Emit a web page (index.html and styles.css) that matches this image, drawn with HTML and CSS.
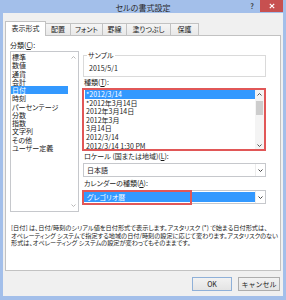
FILE: index.html
```html
<!DOCTYPE html>
<html lang="ja">
<head>
<meta charset="utf-8">
<title>セルの書式設定</title>
<link rel="stylesheet" href="styles.css">
</head>
<body>
<div class="window">
  <div class="titlebar">
    <div class="title">セルの書式設定</div>
    <div class="controls">
      <div class="help">?</div>
      <div class="close">
        <svg width="6" height="6" viewBox="0 0 6 6"><path d="M0.8 0.8L5.2 5.2M5.2 0.8L0.8 5.2" stroke="#fff" stroke-width="1.2" fill="none"/></svg>
      </div>
    </div>
  </div>
  <div class="client">
    <div class="tabs">
      <div class="tab active t1">表示形式</div>
      <div class="tab t2">配置</div>
      <div class="tab t3">フォント</div>
      <div class="tab t4">罫線</div>
      <div class="tab t5">塗りつぶし</div>
      <div class="tab t6">保護</div>
    </div>
    <div class="panel">
      <div class="main">
        <div class="left">
          <div class="lbl">分類(<u>C</u>):</div>
          <div class="listbox cat">
            <ul class="items">
              <li>標準</li>
              <li>数値</li>
              <li>通貨</li>
              <li>会計</li>
              <li class="sel">日付</li>
              <li>時刻</li>
              <li>パーセンテージ</li>
              <li>分数</li>
              <li>指数</li>
              <li>文字列</li>
              <li>その他</li>
              <li>ユーザー定義</li>
            </ul>
            <div class="vscroll disabled">
              <svg class="arr" width="5" height="3" viewBox="0 0 5 3"><path d="M0.5 2.5L2.5 0.5L4.5 2.5" stroke="#b8b8b8" fill="none"/></svg>
              <svg class="arr" width="5" height="3" viewBox="0 0 5 3"><path d="M0.5 0.5L2.5 2.5L4.5 0.5" stroke="#b8b8b8" fill="none"/></svg>
            </div>
          </div>
        </div>
        <div class="right">
          <fieldset class="sample">
            <legend>サンプル</legend>
            <div class="sample-val">2015/5/1</div>
          </fieldset>
          <div class="lbl">種類(<u>T</u>):</div>
          <div class="listbox types">
            <ul class="items">
              <li class="sel">*2012/3/14</li>
              <li>*2012年3月14日</li>
              <li>2012年3月14日</li>
              <li>2012年3月</li>
              <li>3月14日</li>
              <li>2012/3/14</li>
              <li>2012/3/14 1:30 PM</li>
            </ul>
            <div class="vscroll">
              <div class="sbtn"><svg width="5" height="3" viewBox="0 0 5 3"><path d="M0.5 2.5L2.5 0.5L4.5 2.5" stroke="#555" fill="none"/></svg></div>
              <div class="thumb"></div>
              <div class="track"></div>
              <div class="sbtn"><svg width="5" height="3" viewBox="0 0 5 3"><path d="M0.5 0.5L2.5 2.5L4.5 0.5" stroke="#555" fill="none"/></svg></div>
            </div>
          </div>
          <div class="lbl gap">ロケール (国または地域)(<u>L</u>):</div>
          <div class="combo">
            <div class="val">日本語</div>
            <div class="drop"><svg width="5" height="3" viewBox="0 0 5 3"><path d="M0.5 0.5L2.5 2.5L4.5 0.5" stroke="#444" fill="none"/></svg></div>
          </div>
          <div class="lbl gap2">カレンダーの種類(<u>A</u>):</div>
          <div class="combo cal">
            <div class="val">グレゴリオ暦</div>
            <div class="drop"><svg width="5" height="3" viewBox="0 0 5 3"><path d="M0.5 0.5L2.5 2.5L4.5 0.5" stroke="#444" fill="none"/></svg></div>
            <span class="mark"></span>
          </div>
        </div>
      </div>
      <p class="desc">[日付] は、日付/時刻のシリアル値を日付形式で表示します。アスタリスク (*) で始まる日付形式は、<br>オペレーティング システムで指定する地域の日付/時刻の設定に応じて変わります。アスタリスクのない<br>形式は、オペレーティング システムの設定が変わってもそのままです。</p>
    </div>
    <div class="buttons">
      <button class="btn ok">OK</button>
      <button class="btn cancel">キャンセル</button>
    </div>
  </div>
</div>
</body>
</html>
```

FILE: styles.css
```css
* { box-sizing: border-box; }
html, body { margin: 0; padding: 0; }
body {
  width: 286px;
  height: 300px;
  overflow: hidden;
  font-family: "Noto Sans CJK JP", "Noto Sans", sans-serif;
  font-feature-settings: "palt" 1;
  font-size: 7px;
  color: #1a1a1a;
}
ul { list-style: none; margin: 0; padding: 0; }
u { text-decoration-thickness: 0.6px; text-underline-offset: 1px; }

.window {
  width: 286px;
  height: 300px;
  background: #a3bfea;
  display: flex;
  flex-direction: column;
}

/* title bar */
.titlebar {
  height: 13px;
  display: grid;
  grid-template-columns: 1fr auto 1fr;
  align-items: start;
}
.title {
  grid-column: 2;
  font-size: 8px;
  line-height: 12px;
  margin-top: 2px;
  color: #2a2a2a;
  white-space: nowrap;
}
.controls {
  grid-column: 3;
  justify-self: end;
  display: flex;
  align-items: flex-start;
}
.help {
  width: 10px;
  line-height: 12px;
  text-align: center;
  font-size: 7px;
  font-weight: bold;
  color: #3a3a3a;
  margin-right: 3px;
}
.close {
  width: 23px;
  height: 12px;
  margin-right: 3px;
  background: #c75050;
  display: flex;
  align-items: center;
  justify-content: center;
}

/* client area */
.client {
  flex: 1;
  margin: 0 3px 4px;
  background: #f0f0f0;
  padding: 8px 2px 0;
  display: flex;
  flex-direction: column;
}

.tabs {
  display: flex;
  align-items: flex-end;
  height: 14px;
  position: relative;
  z-index: 1;
}
.tab {
  height: 12px;
  border: 1px solid #c2c2c2;
  border-bottom: 0;
  background: linear-gradient(#f5f5f5, #e8e8e8);
  text-align: center;
  line-height: 11px;
  margin-left: -1px;
  white-space: nowrap;
}
.tab.active {
  height: 15px;
  margin-bottom: -1px;
  margin-left: 0;
  background: #fff;
  line-height: 13px;
}
.t1 { width: 41px; }
.t2 { width: 26px; }
.t3 { width: 33px; }
.t4 { width: 25px; }
.t5 { width: 45px; }
.t6 { width: 29px; }

.panel {
  height: 236px;
  border: 1px solid #c2c2c2;
  background: #fff;
  padding: 5px 14px 0 4px;
}

.main {
  display: grid;
  grid-template-columns: 69px 184px;
  column-gap: 3px;
}

.lbl {
  line-height: 9px;
  white-space: nowrap;
}
.right .lbl { padding-left: 2px; margin-top: 1px; }
.right .lbl.gap { margin-top: 1px; }
.right .lbl.gap2 { margin-top: 2px; }

.listbox {
  display: flex;
  border: 1px solid #c6c8cc;
  background: #fff;
  overflow: hidden;
}
.listbox .items { flex: 1; min-width: 0; }
.listbox li { white-space: nowrap; }
.listbox li.sel { background: #3399ff; color: #fff; }

.cat {
  height: 161px;
  margin-top: 1px;
}
.cat .items { padding-top: 1px; }
.cat li {
  line-height: 8.25px;
  height: 8.25px;
  padding-left: 1px;
}
.vscroll {
  display: flex;
  flex-direction: column;
  align-items: center;
}
.cat .vscroll {
  width: 10px;
  justify-content: space-between;
  padding: 4px 0;
}

.types {
  height: 63px;
  margin-top: 1px;
  border: 2px solid #e15757;
}
.types li {
  line-height: 8.6px;
  height: 8.6px;
  padding-left: 1px;
  margin-left: 1px;
}
.types .vscroll {
  width: 9px;
  background: #f4f4f4;
}
.sbtn {
  width: 9px;
  height: 8px;
  display: flex;
  align-items: center;
  justify-content: center;
}
.thumb {
  width: 7px;
  height: 14px;
  margin-top: 3px;
  background: #cdcdcd;
}
.track { flex: 1; }

/* sample group */
.sample {
  margin: 9px 0 0 1px;
  border: 1px solid #dadada;
  padding: 4px 5px 3px;
  min-width: 0;
}
.sample legend {
  padding: 0 1px;
  margin-left: -2px;
  line-height: 10px;
}
.sample-val { line-height: 9px; }

/* combos */
.combo {
  position: relative;
  display: flex;
  height: 14px;
  margin: 2px 0 0 1px;
  border: 1px solid #c6c8cc;
  background: #fff;
}
.combo .val {
  flex: 1;
  line-height: 12px;
  padding-left: 3px;
  white-space: nowrap;
}
.combo .drop {
  width: 10px;
  display: flex;
  align-items: center;
  justify-content: center;
  border-left: 1px solid #ececec;
}
.cal .val {
  background: #3399ff;
  color: #fff;
  margin: 1px 0 1px 0;
  line-height: 10px;
}
.mark {
  position: absolute;
  left: -2px;
  top: -1px;
  width: 110px;
  height: 15px;
  border: 2px solid #e15757;
}

.desc {
  margin: 12px 0 0 1px;
  font-size: 6.2px;
  line-height: 7.6px;
  white-space: nowrap;
  color: #222;
}

/* buttons */
.buttons {
  display: flex;
  justify-content: flex-end;
  gap: 6px;
  margin-top: 6px;
  padding-right: 1px;
}
.btn {
  height: 14px;
  padding: 0;
  border: 1px solid #adadad;
  background: linear-gradient(#f2f2f2, #e4e4e4);
  font-family: inherit;
  font-size: 7px;
  line-height: 12px;
  color: #222;
}
.ok { width: 40px; border-color: #8fb0d8; }
.cancel { width: 42px; }
```
